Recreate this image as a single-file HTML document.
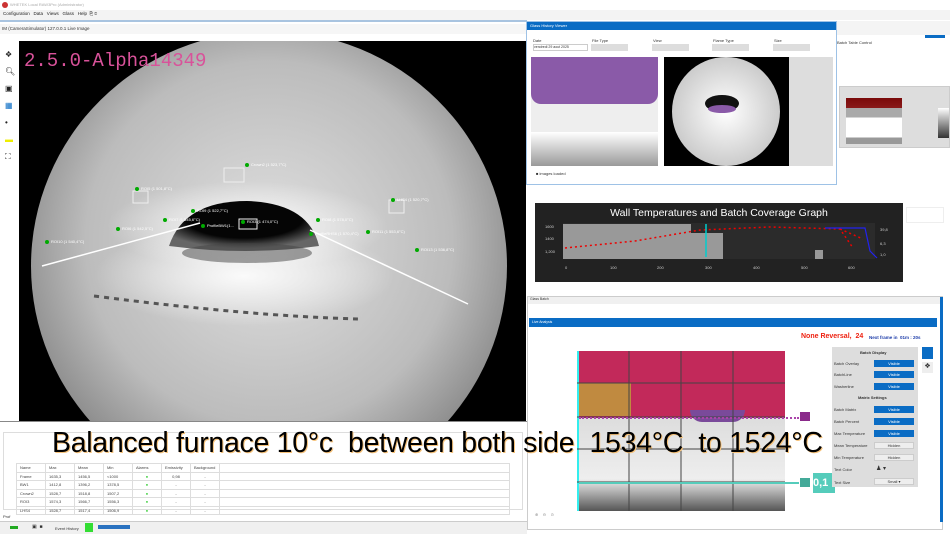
<!DOCTYPE html>
<html><head><meta charset="utf-8"><style>
*{margin:0;padding:0;box-sizing:border-box}
body{width:950px;height:534px;overflow:hidden;background:#fff;font-family:"Liberation Sans",sans-serif;font-size:5px;color:#333;position:relative}
.a{position:absolute}
.btn{position:absolute;background:#0a6cc4;color:#fff;font-size:4px;text-align:center;line-height:7px;height:7px;width:40px}
.hb{position:absolute;background:#eee;border:1px solid #ccc;font-size:4px;text-align:center;line-height:6px;height:7px;width:40px}
.lbl{position:absolute;font-size:4px;color:#333}
table{border-collapse:collapse}
td{border:1px solid #ddd;font-size:4px;height:8.5px;padding:0 3px;color:#444}
</style></head><body>
<!-- title & menu -->
<div class="a" style="left:0;top:0;width:950px;height:10px;background:#fff"><div class="a" style="left:2px;top:2px;width:6px;height:6px;border-radius:50%;background:#c33"></div><span class="a" style="left:10px;top:2px;font-size:4px;color:#aaa">WHETEK Local RAW3Pro (Administrator)</span></div>
<div class="a" style="left:0;top:10px;width:950px;height:10px;background:#f3f3f3;font-size:4.5px;line-height:8px;padding-left:3px;color:#222">Configuration&nbsp;&nbsp; Data&nbsp;&nbsp; Views&nbsp;&nbsp; Glass&nbsp;&nbsp; Help&nbsp; ⎘ ⊙</div>
<div class="a" style="left:0;top:20px;width:527px;height:2px;background:#a9c4e0"></div>
<div class="a" style="left:0;top:24px;width:527px;height:10px;font-size:4.5px;color:#333;padding-left:2px;line-height:10px;background:#f6f6f6">IM (CameraSimulator) 127.0.0.1 Live Image</div>
<!-- left toolbar -->
<div class="a" style="left:5px;top:46px;font-size:8px;color:#222;line-height:17px">❖<br>🔍︎<br>▣<br><span style="color:#0a6cc4">▦</span><br>•<br><span style="color:#ee0">▬</span><br>⛶</div>
<!-- camera -->
<svg class="a" style="left:19px;top:41px" width="507" height="380" viewBox="0 0 507 380">
<defs><radialGradient id="g" cx="0.5" cy="0.45" r="0.55"><stop offset="0" stop-color="#e0e0e0"/><stop offset="0.7" stop-color="#bcbcbc"/><stop offset="1" stop-color="#8a8a8a"/></radialGradient>
<radialGradient id="d" cx="0.5" cy="0.35" r="0.6"><stop offset="0.65" stop-color="#050505"/><stop offset="1" stop-color="#666"/></radialGradient>
<radialGradient id="w" cx="0.5" cy="0.5" r="0.5"><stop offset="0" stop-color="#fafafa"/><stop offset="1" stop-color="#fafafa" stop-opacity="0"/></radialGradient></defs>
<rect width="507" height="380" fill="#000"/>
<ellipse cx="250" cy="225" rx="238" ry="235" fill="url(#g)"/>
<ellipse cx="228" cy="185" rx="140" ry="45" fill="url(#w)"/>
<ellipse cx="225" cy="235" rx="150" ry="50" fill="url(#w)"/>
<path d="M150 205 Q165 160 228 160 Q290 162 300 205 Q228 215 150 205Z" fill="url(#d)"/>
<ellipse cx="228" cy="212" rx="65" ry="10" fill="#444" opacity="0.5"/>
<line x1="23" y1="225" x2="181" y2="182" stroke="#fff" stroke-width="1.5"/>
<line x1="291" y1="189" x2="449" y2="263" stroke="#fff" stroke-width="1.5"/>
<path d="M75 255 Q230 275 340 278" stroke="#555" stroke-width="3" stroke-dasharray="5 5" fill="none"/>
<g fill="none" stroke="#eee" stroke-width="1"><rect x="205" y="127" width="20" height="14"/><rect x="114" y="150" width="15" height="12"/><rect x="370" y="159" width="15" height="13"/><rect x="220" y="178" width="18" height="10"/></g>
<g fill="#0a0"><circle cx="228" cy="124" r="2"/><circle cx="118" cy="148" r="2"/><circle cx="374" cy="159" r="2"/><circle cx="174" cy="170" r="2"/><circle cx="146" cy="179" r="2"/><circle cx="99" cy="188" r="2"/><circle cx="28" cy="201" r="2"/><circle cx="224" cy="181" r="2"/><circle cx="184" cy="185" r="2"/><circle cx="299" cy="179" r="2"/><circle cx="292" cy="193" r="2"/><circle cx="349" cy="191" r="2"/><circle cx="398" cy="209" r="2"/></g>
<g fill="#fff" font-size="4" font-family="Liberation Sans"><text x="232" y="125">Crown2 (1 523,7°C)</text><text x="122" y="149">ROI5 (1 501,8°C)</text><text x="378" y="160">LHS4 (1 520,7°C)</text><text x="178" y="171">ROI9 (1 522,7°C)</text><text x="150" y="180">ROI7 (1 545,6°C)</text><text x="103" y="189">ROI6 (1 542,5°C)</text><text x="32" y="202">ROI10 (1 540,4°C)</text><text x="228" y="182">ROI3 (1 474,0°C)</text><text x="188" y="186">ProfileBW1(1...</text><text x="303" y="180">ROI8 (1 578,0°C)</text><text x="296" y="194">ProfileRHS6 (1 570,4°C)</text><text x="353" y="192">ROI11 (1 553,6°C)</text><text x="402" y="210">ROI13 (1 536,8°C)</text></g>
<text x="5" y="25" fill="#d9529a" font-family="Liberation Mono" font-size="19">2.5.0-Alpha14349</text>
</svg>
<!-- bottom panel -->
<div class="a" style="left:0;top:421px;width:527px;height:1px;background:#888"></div>
<div class="a" style="left:3px;top:432px;width:520px;height:78px;border:1px solid #ddd"></div>
<div class="a" style="left:16px;top:463px"><table>
<tr><td style="width:29px">Name</td><td style="width:29px">Max</td><td style="width:29px">Mean</td><td style="width:29px">Min</td><td style="width:29px">Alarms</td><td style="width:29px">Emissivity</td><td style="width:29px">Background</td><td style="width:290px"></td></tr>
<tr><td>Frame</td><td>1635,3</td><td>1456,5</td><td>&lt;1000</td><td style="text-align:center;color:#3c3">●</td><td style="text-align:center">0,98</td><td style="text-align:center">-</td><td></td></tr>
<tr><td>BW1</td><td>1412,8</td><td>1396,2</td><td>1378,5</td><td style="text-align:center;color:#3c3">●</td><td style="text-align:center">-</td><td style="text-align:center">-</td><td></td></tr>
<tr><td>Crown2</td><td>1528,7</td><td>1518,8</td><td>1507,2</td><td style="text-align:center;color:#3c3">●</td><td style="text-align:center">-</td><td style="text-align:center">-</td><td></td></tr>
<tr><td>ROI3</td><td>1574,3</td><td>1566,7</td><td>1556,3</td><td style="text-align:center;color:#3c3">●</td><td style="text-align:center">-</td><td style="text-align:center">-</td><td></td></tr>
<tr><td>LHS4</td><td>1528,7</td><td>1517,4</td><td>1506,9</td><td style="text-align:center;color:#3c3">●</td><td style="text-align:center">-</td><td style="text-align:center">-</td><td></td></tr>
</table></div>
<div class="a" style="left:3px;top:514px;font-size:4px">Prof</div>
<div class="a" style="left:0;top:521px;width:527px;height:13px;background:#f0f0f0;border-top:1px solid #ccc"></div>
<div class="a" style="left:10px;top:526px;width:8px;height:3px;background:#2a2"></div>
<div class="a" style="left:32px;top:524px;font-size:5px">▣&nbsp; ■</div>
<div class="a" style="left:55px;top:526px;font-size:4px">Event History</div>
<div class="a" style="left:85px;top:523px;width:8px;height:9px;background:#3d3"></div>
<div class="a" style="left:98px;top:525px;width:32px;height:4px;background:#2a72c0"></div>
<!-- glass history viewer -->
<div class="a" style="left:526px;top:21px;width:311px;height:164px;border:1px solid #9ec2e6;background:#fff"></div>
<div class="a" style="left:527px;top:22px;width:309px;height:8px;background:#0a6cc4;color:#fff;font-size:4px;line-height:8px;padding-left:3px">Glass History Viewer</div>
<div class="a" style="left:533px;top:38px;font-size:4px">Date</div><div class="a" style="left:592px;top:38px;font-size:4px">File Type</div><div class="a" style="left:653px;top:38px;font-size:4px">View</div><div class="a" style="left:713px;top:38px;font-size:4px">Flame Type</div><div class="a" style="left:774px;top:38px;font-size:4px">Size</div>
<div class="a" style="left:533px;top:44px;width:55px;height:7px;border:1px solid #ccc;font-size:3.5px">vendredi 29 aout 2025</div>
<div class="a" style="left:591px;top:44px;width:37px;height:7px;background:#ddd"></div><div class="a" style="left:652px;top:44px;width:37px;height:7px;background:#ddd"></div><div class="a" style="left:712px;top:44px;width:37px;height:7px;background:#ddd"></div><div class="a" style="left:773px;top:44px;width:37px;height:7px;background:#ddd"></div>
<div class="a" style="left:531px;top:57px;width:127px;height:109px;background:#eee;overflow:hidden"><div class="a" style="left:0;top:0;width:127px;height:47px;background:#8a5aa8;border-radius:0 0 10px 10px"></div><div class="a" style="left:0;top:75px;width:127px;height:34px;background:linear-gradient(#fff,#999)"></div></div>
<div class="a" style="left:664px;top:57px;width:125px;height:109px;background:#000"><div class="a" style="left:8px;top:0;width:108px;height:109px;border-radius:50%;background:radial-gradient(#fff,#ccc 70%,#999)"></div><div class="a" style="left:41px;top:38px;width:34px;height:17px;border-radius:50%;background:#111"></div><div class="a" style="left:44px;top:48px;width:28px;height:8px;border-radius:50%;background:#8a5aa8"></div></div>
<div class="a" style="left:789px;top:57px;width:44px;height:109px;background:#ddd"></div>
<div class="a" style="left:536px;top:171px;font-size:4px">■ images loaded</div>
<!-- right panel -->
<div class="a" style="left:837px;top:21px;width:113px;height:14px;background:#f4f4f4"></div>
<div class="a" style="left:925px;top:35px;width:20px;height:3px;background:#0a6cc4"></div>
<div class="a" style="left:837px;top:40px;font-size:4px">Batch Table Control</div>
<div class="a" style="left:839px;top:86px;width:111px;height:62px;background:#ddd;border:1px solid #ccc"></div>
<div class="a" style="left:846px;top:98px;width:56px;height:46px;background:linear-gradient(#7a0a0a 0,#8a1a1a 22%,#aaa 22%,#aaa 42%,#fff 42%,#fff 86%,#999 86%)"></div>
<div class="a" style="left:938px;top:108px;width:11px;height:30px;background:linear-gradient(#fff,#333)"></div>
<!-- graph -->
<svg class="a" style="left:535px;top:203px" width="368" height="79" viewBox="0 0 368 79">
<rect width="368" height="79" fill="#222"/>
<text x="184" y="13" fill="#fff" font-size="10.5" text-anchor="middle" font-family="Liberation Sans">Wall Temperatures and Batch Coverage Graph</text>
<rect x="28" y="20" width="312" height="36" fill="#2b2b2b"/>
<rect x="28" y="21" width="128" height="35" fill="#999"/><rect x="156" y="30" width="32" height="26" fill="#999"/><rect x="280" y="47" width="8" height="9" fill="#999"/>
<path d="M30 45 L100 38 L165 27 L235 24 L305 26 L318 45 M305 26 L328 36" stroke="#e00" stroke-width="1.5" fill="none" stroke-dasharray="2 3"/>
<path d="M290 25 L330 25 L335 48 L342 55" stroke="#22e" stroke-width="1.2" fill="none"/>
<line x1="171" y1="21" x2="171" y2="54" stroke="#0cc" stroke-width="1.5"/>
<text x="10" y="25" fill="#ccc" font-size="4">1600</text><text x="10" y="37" fill="#ccc" font-size="4">1400</text><text x="10" y="50" fill="#ccc" font-size="4">1,200</text>
<text x="30" y="66" fill="#ccc" font-size="4">0</text><text x="75" y="66" fill="#ccc" font-size="4">100</text><text x="122" y="66" fill="#ccc" font-size="4">200</text><text x="170" y="66" fill="#ccc" font-size="4">300</text><text x="218" y="66" fill="#ccc" font-size="4">400</text><text x="266" y="66" fill="#ccc" font-size="4">500</text><text x="313" y="66" fill="#ccc" font-size="4">600</text>
<text x="345" y="28" fill="#ccc" font-size="4">39,8</text><text x="345" y="42" fill="#ccc" font-size="4">6,3</text><text x="345" y="53" fill="#ccc" font-size="4">1,0</text>
</svg>
<div class="a" style="left:906px;top:207px;width:38px;height:16px;border:1px solid #eee"></div>
<!-- glass batch -->
<div class="a" style="left:527px;top:296px;width:416px;height:234px;border:1px solid #ccc;background:#fff"></div>
<div class="a" style="left:528px;top:297px;width:414px;height:7px;background:#f0f0f0;font-size:3.5px;padding-left:2px">Glass Batch</div>
<div class="a" style="left:940px;top:297px;width:3px;height:225px;background:#0a6cc4"></div>
<div class="a" style="left:529px;top:318px;width:408px;height:9px;background:#0a6cc4;color:#fff;font-size:3.5px;line-height:9px;padding-left:3px">Live Analysis</div>
<div class="a" style="left:801px;top:333px;font-size:7px;font-weight:bold;color:#e21">None Reversal,&nbsp; 24</div>
<div class="a" style="left:869px;top:335px;font-size:4.5px;font-weight:bold;color:#1a3aa8">Next frame in &nbsp;01m : 20s</div>
<div class="a" style="left:577px;top:351px;width:208px;height:160px;background:linear-gradient(#c2295a 0,#c2295a 42%,#ddd 42%,#eee 80%,#555)"></div>
<div class="a" style="left:579px;top:383px;width:52px;height:33px;background:#c08a40"></div>
<div class="a" style="left:690px;top:410px;width:55px;height:12px;border-radius:0 0 25px 25px;background:#7a4a9a"></div>
<div class="a" style="left:577px;top:351px;width:2px;height:160px;background:#3ee"></div>
<svg class="a" style="left:577px;top:351px" width="208" height="160"><g stroke="#444" stroke-width="1"><line x1="52" y1="0" x2="52" y2="160"/><line x1="104" y1="0" x2="104" y2="160"/><line x1="156" y1="0" x2="156" y2="160"/><line x1="0" y1="32" x2="208" y2="32"/><line x1="0" y1="66" x2="208" y2="66"/><line x1="0" y1="98" x2="208" y2="98"/><line x1="0" y1="131" x2="208" y2="131"/></g></svg>
<div class="a" style="left:579px;top:417px;width:220px;border-top:2px dotted #a4a"></div>
<div class="a" style="left:800px;top:412px;width:10px;height:9px;background:#8a2a8a"></div>
<div class="a" style="left:579px;top:482px;width:220px;height:2px;background:#5cb"></div>
<div class="a" style="left:800px;top:478px;width:10px;height:9px;background:#4a9"></div>
<div class="a" style="left:813px;top:473px;width:22px;height:20px;background:#5cb;color:#fff;font-size:11px;font-weight:bold;line-height:20px">0,1</div>
<!-- settings panel -->
<div class="a" style="left:832px;top:347px;width:86px;height:140px;background:#ddd"></div>
<div class="lbl" style="left:860px;top:350px;font-weight:bold">Batch Display</div>
<div class="lbl" style="left:834px;top:361px">Batch Overlay</div><div class="btn" style="left:874px;top:360px">Visible</div>
<div class="lbl" style="left:834px;top:372px">BatchLine</div><div class="btn" style="left:874px;top:371px">Visible</div>
<div class="lbl" style="left:834px;top:384px">Washerline</div><div class="btn" style="left:874px;top:383px">Visible</div>
<div class="lbl" style="left:858px;top:395px;font-weight:bold">Matrix Settings</div>
<div class="lbl" style="left:834px;top:407px">Batch Matrix</div><div class="btn" style="left:874px;top:406px">Visible</div>
<div class="lbl" style="left:834px;top:419px">Batch Percent</div><div class="btn" style="left:874px;top:418px">Visible</div>
<div class="lbl" style="left:834px;top:431px">Max Temperature</div><div class="btn" style="left:874px;top:430px">Visible</div>
<div class="lbl" style="left:834px;top:443px">Mean Temperature</div><div class="hb" style="left:874px;top:442px">Hidden</div>
<div class="lbl" style="left:834px;top:455px">Min Temperature</div><div class="hb" style="left:874px;top:454px">Hidden</div>
<div class="lbl" style="left:834px;top:467px">Text Color</div><div class="lbl" style="left:876px;top:465px;font-size:6px">♟ ▾</div>
<div class="lbl" style="left:834px;top:480px">Text Size</div><div class="hb" style="left:874px;top:478px">Small ▾</div>
<div class="a" style="left:922px;top:347px;width:11px;height:12px;background:#0a6cc4"></div>
<div class="a" style="left:922px;top:362px;width:11px;height:11px;background:#eee;font-size:7px;text-align:center">❖</div>
<div class="a" style="left:535px;top:512px;font-size:4px;color:#888">⊕&nbsp;&nbsp;&nbsp; ⊖&nbsp;&nbsp;&nbsp; ⊙</div>
<!-- overlay caption -->
<div class="a" style="left:52px;top:427px;font-size:28.5px;color:#000;white-space:pre;letter-spacing:-0.3px;text-shadow:1px 1px 0 #f6c27a">Balanced furnace 10°c  between both side  1534°C  to 1524°C</div>
</body></html>
